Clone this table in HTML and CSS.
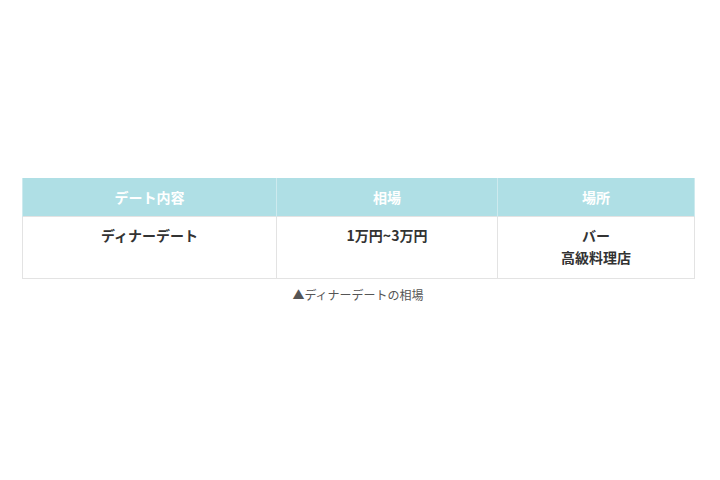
FILE: index.html
```html
<!DOCTYPE html>
<html lang="ja">
<head>
<meta charset="utf-8">
<link rel="stylesheet" href="styles.css">
</head>
<body>
<div class="page">
  <table class="price-table">
    <thead>
      <tr>
        <th class="c1">デート内容</th>
        <th class="c2">相場</th>
        <th class="c3">場所</th>
      </tr>
    </thead>
    <tbody>
      <tr>
        <td>ディナーデート</td>
        <td>1万円~3万円</td>
        <td>バー<br>高級料理店</td>
      </tr>
    </tbody>
  </table>
  <p class="caption">▲ディナーデートの相場</p>
</div>
</body>
</html>
```
FILE: styles.css
```css
html, body {
  margin: 0;
  padding: 0;
  background: #ffffff;
}
body {
  font-family: "Noto Sans CJK JP", "Noto Sans", sans-serif;
  color: #333333;
}
.page {
  padding: 178px 26px 0 22px;
}
.price-table {
  width: 669px;
  border-collapse: collapse;
  table-layout: fixed;
}
.c1 { width: 253px; }
.c2 { width: 220px; }
.c3 { width: 196px; }
.price-table th {
  background: #afdfe5;
  color: #ffffff;
  font-weight: 700;
  font-size: 14px;
  height: 38px;
  padding: 0;
  border-left: 1px solid #cdeaee;
  border-right: 1px solid #cdeaee;
  line-height: 20px;
}
.price-table td {
  font-size: 14px;
  font-weight: 700;
  line-height: 22px;
  text-align: center;
  vertical-align: top;
  padding: 7px 4px 9px;
  height: 45px;
  border: 1px solid #e3e3e3;
}
.caption {
  margin: 7px 0 0;
  width: 672px;
  text-align: center;
  font-size: 12px;
  color: #555555;
  line-height: 18px;
}
```
